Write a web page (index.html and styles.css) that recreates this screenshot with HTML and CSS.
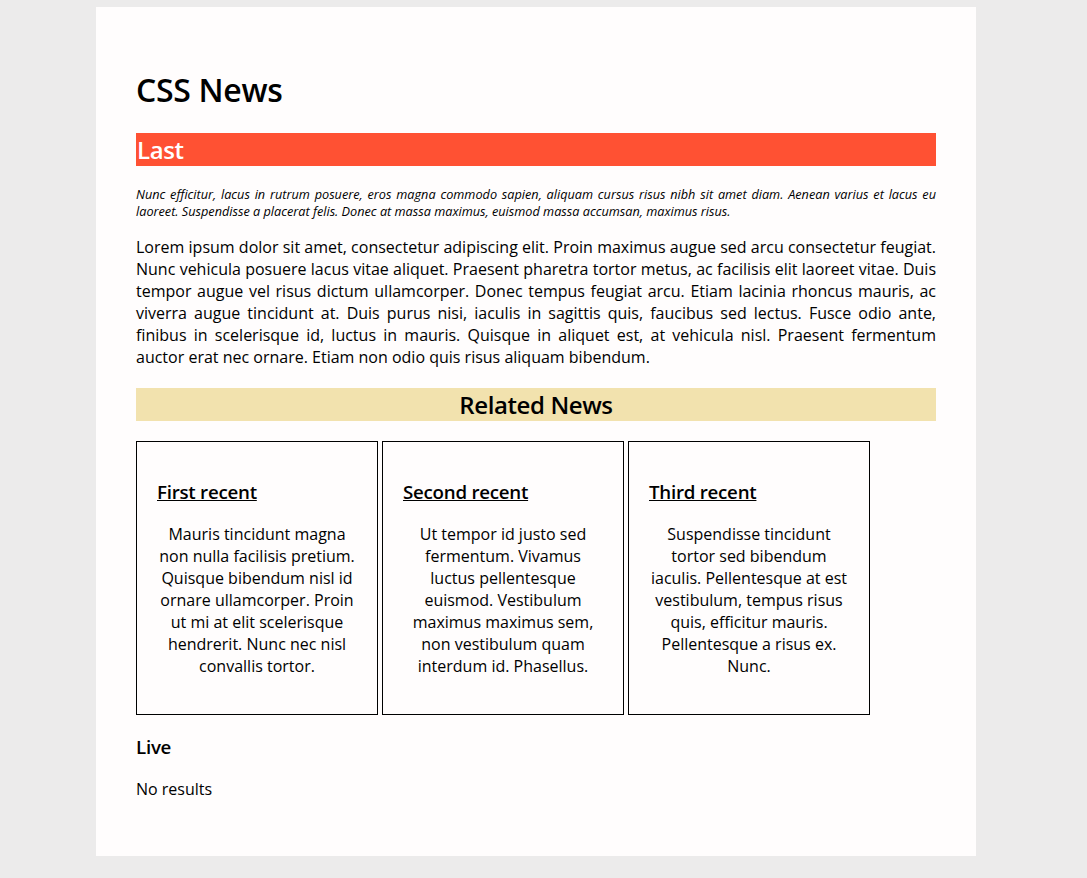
FILE: index.html
```html
<!DOCTYPE html>
<html lang="en">
<head>
<meta charset="utf-8">
<title>CSS News</title>
<link rel="stylesheet" href="styles.css">
</head>
<body>
<main class="page">
  <h1 class="title">CSS News</h1>
  <h2 class="last">Last</h2>
  <p class="lead">Nunc efficitur, lacus in rutrum posuere, eros magna commodo sapien, aliquam cursus risus nibh sit amet diam. Aenean varius et lacus eu laoreet. Suspendisse a placerat felis. Donec at massa maximus, euismod massa accumsan, maximus risus.</p>
  <p class="body-text">Lorem ipsum dolor sit amet, consectetur adipiscing elit. Proin maximus augue sed arcu consectetur feugiat. Nunc vehicula posuere lacus vitae aliquet. Praesent pharetra tortor metus, ac facilisis elit laoreet vitae. Duis tempor augue vel risus dictum ullamcorper. Donec tempus feugiat arcu. Etiam lacinia rhoncus mauris, ac viverra augue tincidunt at. Duis purus nisi, iaculis in sagittis quis, faucibus sed lectus. Fusce odio ante, finibus in scelerisque id, luctus in mauris. Quisque in aliquet est, at vehicula nisl. Praesent fermentum auctor erat nec ornare. Etiam non odio quis risus aliquam bibendum.</p>
  <h2 class="related">Related News</h2>
  <div class="cards">
    <article class="card">
      <h3 class="card-title">First recent</h3>
      <p class="card-text">Mauris tincidunt magna non nulla facilisis pretium. Quisque bibendum nisl id ornare ullamcorper. Proin ut mi at elit scelerisque hendrerit. Nunc nec nisl convallis tortor.</p>
    </article>
    <article class="card">
      <h3 class="card-title">Second recent</h3>
      <p class="card-text">Ut tempor id justo sed fermentum. Vivamus luctus pellentesque euismod. Vestibulum maximus maximus sem, non vestibulum quam interdum id. Phasellus.</p>
    </article>
    <article class="card">
      <h3 class="card-title">Third recent</h3>
      <p class="card-text">Suspendisse tincidunt tortor sed bibendum iaculis. Pellentesque at est vestibulum, tempus risus quis, efficitur mauris. Pellentesque a risus ex. Nunc.</p>
    </article>
  </div>
  <h3 class="live">Live</h3>
  <p class="no-results">No results</p>
</main>
</body>
</html>
```

FILE: styles.css
```css
html {
  background: #ecebeb;
}

body {
  margin: 0;
  padding: 7px 15px 22px 0;
  font-family: "Open Sans", "Liberation Sans", sans-serif;
  font-size: 16px;
  color: #000;
}

.page {
  width: 800px;
  margin: 0 auto;
  padding: 40px;
  background: #fffdfd;
}

.title {
  font-size: 32px;
  font-weight: 600;
  letter-spacing: -0.3px;
  margin: 21px 0;
  line-height: 44px;
}

.last {
  font-size: 24px;
  font-weight: 600;
  letter-spacing: -0.4px;
  color: #fff;
  background: #ff5133;
  margin: 20px 0;
  line-height: 33px;
  padding: 0 1px;
}

.lead {
  font-size: 12.7px;
  font-style: italic;
  text-align: justify;
  line-height: 17px;
  margin: 12.8px 0 16px;
}

.body-text {
  text-align: justify;
  line-height: 22px;
  margin: 16px 0;
}

.related {
  font-size: 24px;
  font-weight: 600;
  letter-spacing: -0.4px;
  text-align: center;
  background: #f2e2ae;
  margin: 20px 0;
  line-height: 33px;
}

.cards {
  display: flex;
  gap: 4px;
}

.card {
  width: 200px;
  padding: 20px 20px 21px;
  border: 1px solid #000;
}

.card-title {
  font-size: 18.72px;
  font-weight: 600;
  letter-spacing: -0.25px;
  text-decoration: underline;
  text-decoration-thickness: 1px;
  margin: 17px 0 19px;
  line-height: 25px;
}

.card-text {
  text-align: center;
  line-height: 22px;
  margin: 16px 0;
}

.live {
  font-size: 18.72px;
  font-weight: 600;
  letter-spacing: -0.25px;
  margin: 18.72px 0;
  line-height: 25px;
}

.no-results {
  margin: 19px 0 16px;
  line-height: 22px;
}
```
